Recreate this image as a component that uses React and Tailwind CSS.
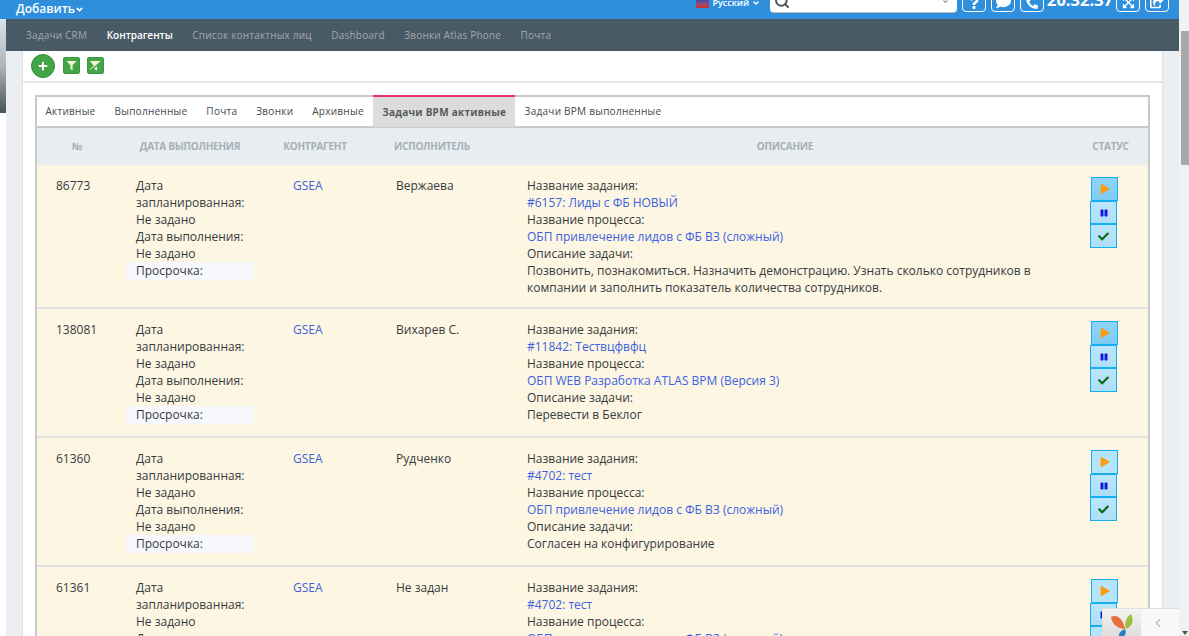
import { ChevronDown, ChevronLeft, Search } from "lucide-react";
import { FaQuestion, FaComment, FaPhone, FaExpandArrowsAlt, FaShareSquare, FaPlus, FaFilter, FaPlay, FaPause, FaCheck } from "react-icons/fa";

const tabs = ["Активные", "Выполненные", "Почта", "Звонки", "Архивные", "Задачи BPM активные", "Задачи BPM выполненные"];
const nav = ["Задачи CRM", "Контрагенты", "Список контактных лиц", "Dashboard", "Звонки Atlas Phone", "Почта"];

const rows = [
  {
    id: "86773", user: "Вержаева", task: "#6157: Лиды с ФБ НОВЫЙ", proc: "ОБП привлечение лидов с ФБ ВЗ (сложный)", active: true,
    desc: "Позвонить, познакомиться. Назначить демонстрацию. Узнать сколько сотрудников в компании и заполнить показатель количества сотрудников.",
  },
  { id: "138081", user: "Вихарев С.", task: "#11842: Тествцфвфц", proc: "ОБП WEB Разработка ATLAS BPM (Версия 3)", desc: "Перевести в Беклог", active: true },
  { id: "61360", user: "Рудченко", task: "#4702: тест", proc: "ОБП привлечение лидов с ФБ ВЗ (сложный)", desc: "Согласен на конфигурирование" },
  { id: "61361", user: "Не задан", task: "#4702: тест", proc: "ОБП привлечение лидов с ФБ ВЗ (сложный)", desc: "Согласен на конфигурирование" },
];

const cols = "grid grid-cols-[80px_146px_104px_130px_576px_75px]";

function TopButton({ children }) {
  return (
    <div className="flex h-[23px] w-[24px] items-end justify-center rounded-[4px] border border-white pb-[2px] text-[14px] text-white">
      {children}
    </div>
  );
}

function StatusButton({ children, className }) {
  return (
    <div className={`flex w-[27px] items-center justify-center border border-[#16aeef] text-[10px] ${className}`}>
      {children}
    </div>
  );
}

function Row({ row }) {
  return (
    <div className={`${cols} border-b-2 border-[#e2e3e0] bg-[#fdf6e3] text-[12px] leading-[17px] text-[#363b40]`}>
      <div className="pl-[8px] pr-[9px] pt-[12px]">
        <div className="border-b border-[#f6f3ea] pb-[3px] pl-[11px]">{row.id}</div>
      </div>
      <div className="pb-[12px] pl-[9px] pr-[9px] pt-[12px]">
        <div className="pl-[10px]">Дата запланированная:</div>
        <div className="pl-[10px]">Не задано</div>
        <div className="pl-[10px]">Дата выполнения:</div>
        <div className="pl-[10px]">Не задано</div>
        <div className="bg-[#f6f8fc] pl-[10px] leading-[18px]">Просрочка:</div>
      </div>
      <div className="pl-[30px] pt-[12px] text-[#3b62e0]">GSEA</div>
      <div className="pl-[29px] pt-[12px]">{row.user}</div>
      <div className="pb-[11px] pl-[30px] pr-[38px] pt-[12px]">
        <div>Название задания:</div>
        <div className="text-[#3b62e0]">{row.task}</div>
        <div>Название процесса:</div>
        <div className="text-[#3b62e0]">{row.proc}</div>
        <div>Описание задачи:</div>
        <div>{row.desc}</div>
      </div>
      <div className="flex flex-col pl-[17px] pt-[12px]">
        <StatusButton className={`ml-[1px] h-[24px] text-[#fb9d0e] ${row.active ? "bg-gradient-to-b from-[#8ed4f8] to-[#7fcbf2]" : "bg-[#b5e4fb]"}`}>
          <FaPlay size={10} />
        </StatusButton>
        <StatusButton className="h-[23px] bg-gradient-to-b from-[#b9e6fc] to-[#aedff8] text-[#1a18d8]"><FaPause size={8} /></StatusButton>
        <StatusButton className="h-[24px] bg-gradient-to-b from-[#b9e6fc] to-[#aedff8] text-[#0a6a14]"><FaCheck size={11} /></StatusButton>
      </div>
    </div>
  );
}

export default function App() {
  return (
    <div className="relative flex h-[636px] w-[1189px] overflow-hidden bg-white font-['Open_Sans',sans-serif]">
      {/* left edge, wallpaper behind the page */}
      <div className="w-[6px] shrink-0 pt-[19px]">
        <div className="h-[94px] bg-gradient-to-b from-[#d7e2ea] via-[#aeb6b9] to-[#4a555a]" />
      </div>

      <div className="flex w-[1173px] shrink-0 flex-col">
        <div className="-ml-[6px] flex h-[19px] w-[1179px] items-end justify-between overflow-hidden bg-[#2f8fdd] pb-[3px] pl-[16px] pr-[10px] text-white">
          <div className="flex items-center text-[12px] font-semibold leading-[14px]">
            Добавить<ChevronDown size={9} strokeWidth={4} />
          </div>
          <div className="flex h-[40px] items-end">
            <div className="mb-[7px] mr-[10px] flex items-center gap-[3px] text-[9px] font-semibold leading-[12px]">
              <div className="h-[9px] w-[13px] bg-gradient-to-b from-[#3040b0] to-[#d8262c]" />
              Русский<ChevronDown size={8} strokeWidth={4} />
            </div>
            <div className="mb-[3px] mr-[5px] flex h-[23px] w-[187px] items-center justify-between rounded-[4px] border-b border-[#b9b9b9] bg-white pl-[4px] pr-[8px]">
              <Search size={16} strokeWidth={3} className="text-[#555]" />
              <ChevronDown size={7} strokeWidth={4} className="text-[#999]" />
            </div>
            <div className="mb-[4px] flex items-end gap-[5px]">
              <TopButton><FaQuestion size={12} /></TopButton>
              <TopButton><FaComment size={15} /></TopButton>
              <TopButton><FaPhone size={12} className="-scale-x-100" /></TopButton>
            </div>
            <div className="mb-[6px] ml-[3px] mr-[5px] w-[64px] whitespace-nowrap text-[16.5px] font-bold leading-[20px]">20:32:37</div>
            <div className="mb-[4px] flex items-end gap-[5px]">
              <TopButton><FaExpandArrowsAlt size={13} /></TopButton>
              <TopButton><FaShareSquare size={14} /></TopButton>
            </div>
          </div>
        </div>

        <div className="flex h-[32px] shrink-0 items-center gap-[19.5px] bg-[#485a66] pl-[20px] text-[10px] tracking-[0.2px] text-[#a3a8ab]">
          {nav.map((item) => (
            <span key={item} className={item === "Контрагенты" ? "font-semibold tracking-normal text-white" : ""}>{item}</span>
          ))}
        </div>

        <div className="flex min-h-0 flex-1 bg-[#ebeef2] pl-[16px] pr-[16px]">
          <div className="min-h-0 w-[1141px] shrink-0 border-x border-[#dfe1e3] bg-white">
            <div className="flex h-[32px] items-center border-b-2 border-[#e6e6e6] pb-[1px] pl-[8px]">
              <div className="flex h-[24px] w-[24px] items-center justify-center rounded-full border border-[#2f8f3a] bg-[#43a548] text-white">
                <FaPlus size={10} />
              </div>
              <div className="ml-[8px] flex h-[17px] w-[17px] items-center justify-center rounded-[2px] border border-[#3c9642] bg-[#43a548] text-[#f3f7d8]">
                <FaFilter size={9} />
              </div>
              <div className="ml-[7px] flex h-[17px] w-[17px] items-center justify-center rounded-[2px] border border-[#3c9642] bg-[#43a548] text-[#f3f7d8]">
                <svg width="13" height="13" viewBox="0 0 13 13">
                  <path d="M1 2h11L8 7v4.5L5 10V7Z" fill="currentColor" />
                  <path d="M1.5 12 12 2.5" stroke="#43a548" strokeWidth="1.5" />
                  <path d="M1 10.5 5 7" stroke="currentColor" strokeWidth="1" />
                </svg>
              </div>
            </div>

            <div className="ml-[12px] mt-[12px] w-[1115px] border-x-2 border-t-2 border-[#c9c9c9]">
              <div className="-ml-[1px] flex h-[31px] border-b-2 border-[#c9c9c9] text-[10px] tracking-[0.26px] text-[#444a4f]">
                {tabs.map((tab, i) => (
                  <div
                    key={tab}
                    className={
                      i === 5
                        ? "-mt-[2px] flex h-[32px] items-center border-t-2 border-[#ec2f6b] bg-[#dcdcdc] px-[9px] font-bold text-[#555a5e]"
                        : "flex items-center px-[9.5px]"
                    }
                  >
                    {tab}
                  </div>
                ))}
              </div>
              <div className={`${cols} h-[37px] items-center bg-[#e9edf0] text-center text-[10px] font-bold uppercase tracking-[-0.25px] text-[#a3b0b8]`}>
                <div>№</div>
                <div>Дата выполнения</div>
                <div>Контрагент</div>
                <div>Исполнитель</div>
                <div>Описание</div>
                <div>Статус</div>
              </div>
              {rows.map((row) => (
                <Row key={row.id} row={row} />
              ))}
            </div>
          </div>
        </div>
      </div>

      {/* scrollbar */}
      <div className="relative w-[10px] shrink-0 bg-[#f1f1f1]">
        <div className="ml-[2px] mt-[31px] h-[134px] w-[8px] bg-[#a8a8a8]" />
        <div className="absolute bottom-[1px] right-[1px] h-0 w-0 border-x-[3px] border-t-[4px] border-x-transparent border-t-[#505050]" />
      </div>

      {/* debug toolbar */}
      <div className="absolute bottom-0 right-[10px] flex h-[28px] w-[77px] border-l border-t border-[#e0e0e0]">
        <div className="w-[38px] overflow-hidden bg-gradient-to-b from-[#f4f4f4] to-[#dedede] pl-[7px] pt-[5px]">
          <svg width="24" height="24" viewBox="0 0 24 24">
            <path d="M1 3C6 0 13 4 15 15 9 15 2 11 1 3Z" fill="#e8703a" />
            <path d="M21 0c3 6 2 12-5 15-2-6 0-12 5-15Z" fill="#9cc13c" />
            <path d="M15 15c2 4 0 7-3 9H9c-1-4 1-7 6-9Z" fill="#2a7fc4" />
          </svg>
        </div>
        <div className="flex flex-1 items-center justify-center bg-[#f8f8f8] pr-[4px] text-[#b5b5b5]">
          <ChevronLeft size={14} />
        </div>
      </div>
    </div>
  );
}
